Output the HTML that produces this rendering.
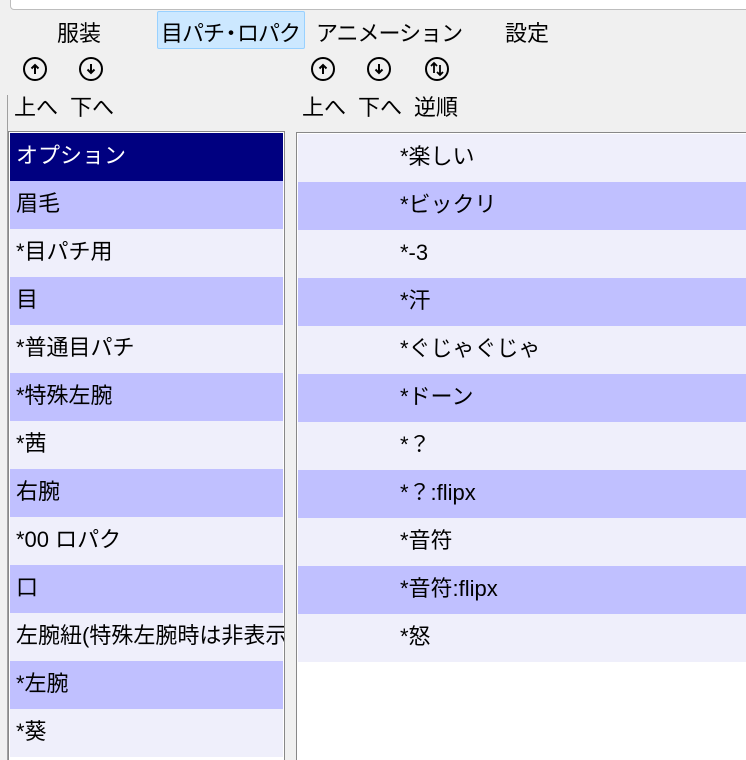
<!DOCTYPE html><html style="height:760px;overflow:hidden"><head><meta charset="utf-8"><style>
body{margin:0;width:746px;height:760px;background:#f0f0f0;position:relative;overflow:hidden;font-family:"Liberation Sans","Noto Sans CJK JP",sans-serif;font-size:22px;color:#000}
.a{position:absolute;white-space:nowrap}
.top{position:absolute;left:10px;top:-10px;width:760px;height:18px;background:#fff;border:1px solid #bdbdbd;border-radius:4px}
.tab{position:absolute;top:15px;height:38px;line-height:38px;font-size:22px}
.ic{position:absolute;top:57px;width:24px;height:24px;border:2px solid #000;border-radius:50%;box-sizing:border-box}
.ic svg{position:absolute;left:0;top:0}
.box{position:absolute;border:1px solid #888;background:#fff;overflow:hidden}
.row{height:48px;line-height:46px;padding-left:6px;white-space:nowrap}
.p{background:#c0c0ff}.l{background:#efeffb}
</style></head><body>
<div class="top"></div>
<div class="tab a" style="left:57px">服装</div>
<div class="a" style="left:157px;top:11px;width:146px;height:36px;border:1px solid #99d1ff;background:#cce8ff;border-radius:2px"></div>
<div class="tab a" style="left:161px;letter-spacing:-1px">目パチ<span style="margin:0 -4px">・</span>ロパク</div>
<div class="tab a" style="left:316px;letter-spacing:-1px">アニメーション</div>
<div class="tab a" style="left:505px">設定</div>
<div class="ic" style="left:23px"><svg width="20" height="20"><path d="M10 15V6M6.5 9.5L10 6l3.5 3.5" stroke="#000" stroke-width="2" fill="none"/></svg></div>
<div class="ic" style="left:79px"><svg width="20" height="20"><path d="M10 5v9M6.5 10.5L10 14l3.5-3.5" stroke="#000" stroke-width="2" fill="none"/></svg></div>
<div class="ic" style="left:311px"><svg width="20" height="20"><path d="M10 15V6M6.5 9.5L10 6l3.5 3.5" stroke="#000" stroke-width="2" fill="none"/></svg></div>
<div class="ic" style="left:367px"><svg width="20" height="20"><path d="M10 5v9M6.5 10.5L10 14l3.5-3.5" stroke="#000" stroke-width="2" fill="none"/></svg></div>
<div class="ic" style="left:425px"><svg width="20" height="20"><path d="M7 14V4M4 7l3-3 3 3M13 6v10M10 13l3 3 3-3" stroke="#000" stroke-width="1.8" fill="none"/></svg></div>
<div class="a" style="left:14px;top:90px">上へ</div>
<div class="a" style="left:70px;top:90px">下へ</div>
<div class="a" style="left:302px;top:90px">上へ</div>
<div class="a" style="left:358px;top:90px">下へ</div>
<div class="a" style="left:414px;top:90px">逆順</div>
<div style="position:absolute;left:0;top:95px;width:7px;height:700px;border-right:1px solid #a0a0a0"></div>
<div class="box" style="left:8px;top:131px;width:273px;height:640px;padding:1px;background:#fff">
<div class="row" style="background:#000080;color:#fff">オプション</div>
<div class="row p">眉毛</div><div class="row l">*目パチ用</div><div class="row p">目</div><div class="row l">*普通目パチ</div><div class="row p">*特殊左腕</div><div class="row l">*茜</div><div class="row p">右腕</div><div class="row l">*00 ロパク</div><div class="row p">口</div><div class="row l">左腕紐(特殊左腕時は非表示)</div><div class="row p">*左腕</div><div class="row l">*葵</div>
</div>
<div class="box" style="left:296px;top:132px;width:460px;height:640px;padding:1px 0 0 1px">
<div class="row l" style="padding-left:102px">*楽しい</div><div class="row p" style="padding-left:102px">*ビックリ</div><div class="row l" style="padding-left:102px">*-3</div><div class="row p" style="padding-left:102px">*汗</div><div class="row l" style="padding-left:102px">*ぐじゃぐじゃ</div><div class="row p" style="padding-left:102px">*ドーン</div><div class="row l" style="padding-left:102px">*？</div><div class="row p" style="padding-left:102px">*？:flipx</div><div class="row l" style="padding-left:102px">*音符</div><div class="row p" style="padding-left:102px">*音符:flipx</div><div class="row l" style="padding-left:102px">*怒</div>
</div>
</body></html>
